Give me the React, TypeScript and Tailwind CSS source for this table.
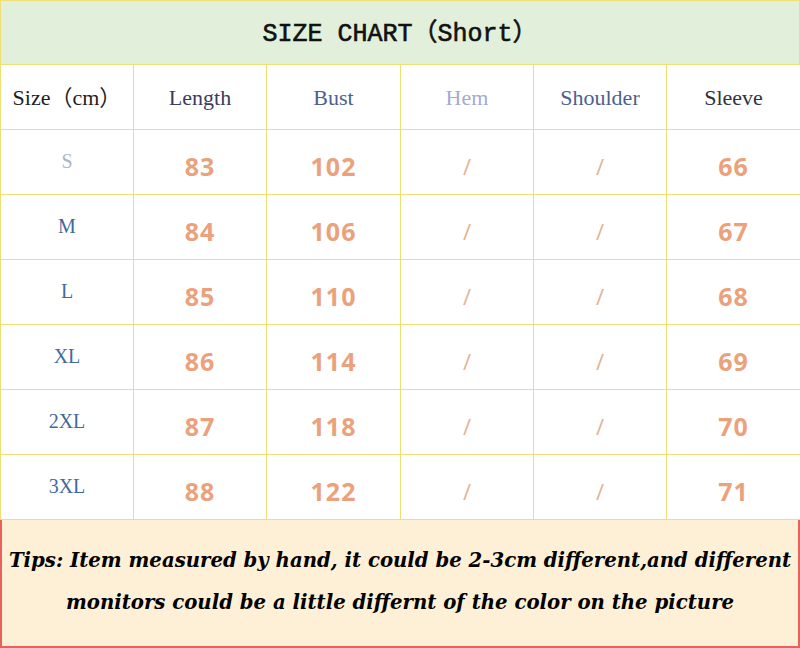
const headers = [
  { label: 'Size（cm）', color: 'text-[#1f1f1f]' },
  { label: 'Length', color: 'text-[#3a3d5c]' },
  { label: 'Bust', color: 'text-[#4d5f8f]' },
  { label: 'Hem', color: 'text-[#a3abd0]' },
  { label: 'Shoulder', color: 'text-[#4d5f8f]' },
  { label: 'Sleeve', color: 'text-[#30343f]' },
]

const rows = [
  { size: 'S', length: 83, bust: 102, sleeve: 66, light: true },
  { size: 'M', length: 84, bust: 106, sleeve: 67 },
  { size: 'L', length: 85, bust: 110, sleeve: 68 },
  { size: 'XL', length: 86, bust: 114, sleeve: 69 },
  { size: '2XL', length: 87, bust: 118, sleeve: 70 },
  { size: '3XL', length: 88, bust: 122, sleeve: 71 },
]

const cell = 'h-[65px] flex items-center justify-center border-r border-b border-[#efdf74]'
const serif = { fontFamily: '"Liberation Serif", "Noto Sans CJK SC", serif' }
const sans = { fontFamily: '"Open Sans", sans-serif' }
const num = 'pt-[10px] font-bold text-[25px] text-[#eba27c] tracking-[1px]'
const slash = 'pt-[8px] text-[22px] text-[#e3b394]'

export default function App() {
  return (
    <div className="w-[800px] h-[648px] bg-white overflow-hidden">
      <div
        className="h-[65px] flex items-center justify-center bg-[#e2efda] border border-[#efdf74] text-[25px] text-[#111] pt-1 [-webkit-text-stroke:0.6px_#111]"
        style={{ fontFamily: '"Liberation Mono", "Noto Sans CJK SC", monospace' }}
      >
        SIZE CHART（Short）
      </div>

      <div className="grid grid-cols-[133px_133px_134px_133px_133px_134px] border-l border-[#efdf74]" style={serif}>
        {headers.map((h) => (
          <div key={h.label} className={`${cell} text-[22px] ${h.color}`}>
            {h.label}
          </div>
        ))}
        {rows.map((r) => (
          <div key={r.size} className="contents">
            <div className={`${cell} pb-[3px] text-[20px] ${r.light ? 'text-[#a8b5cd]' : 'text-[#3f6a9c]'}`}>{r.size}</div>
            <div className={cell} style={sans}>
              <span className={num}>{r.length}</span>
            </div>
            <div className={cell} style={sans}>
              <span className={num}>{r.bust}</span>
            </div>
            <div className={cell} style={sans}>
              <span className={slash}>/</span>
            </div>
            <div className={cell} style={sans}>
              <span className={slash}>/</span>
            </div>
            <div className={cell} style={sans}>
              <span className={num}>{r.sleeve}</span>
            </div>
          </div>
        ))}
      </div>

      <div
        className="h-[128px] bg-[#fdf0d6] border-l-2 border-r-2 border-b-2 border-[#e8625b] flex flex-col items-center pt-[26px] gap-[13px] text-[19.7px] font-bold italic text-black leading-[29px] whitespace-nowrap"
        style={{ fontFamily: '"DejaVu Serif", serif' }}
      >
        <div>Tips: Item measured by hand, it could be 2-3cm different,and different</div>
        <div>monitors could be a little differnt of the color on the picture</div>
      </div>
    </div>
  )
}
